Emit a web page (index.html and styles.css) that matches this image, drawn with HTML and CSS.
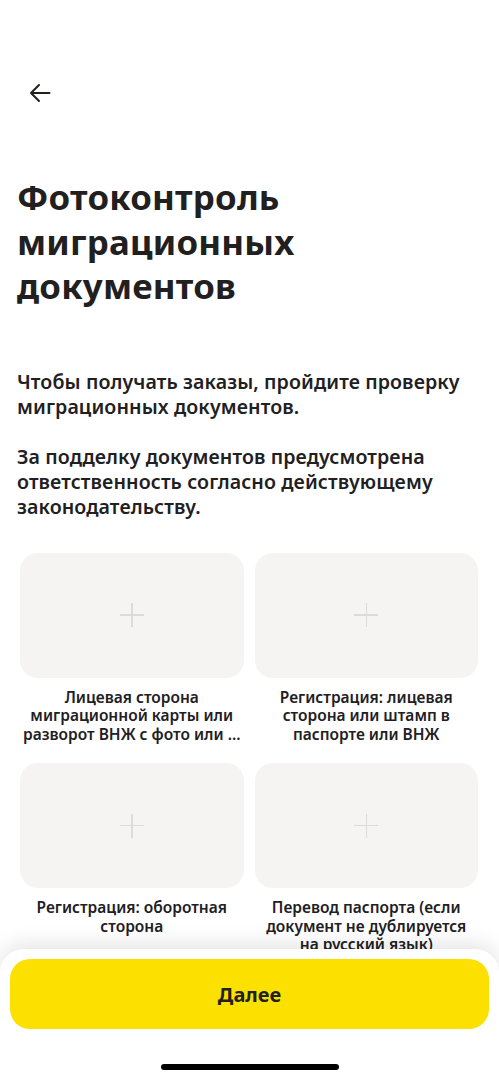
FILE: index.html
```html
<!DOCTYPE html>
<html lang="ru">
<head>
<meta charset="utf-8">
<title>Фотоконтроль миграционных документов</title>
<link rel="stylesheet" href="styles.css">
</head>
<body>
<div class="page">
  <header class="header">
    <svg class="back" width="22" height="22" viewBox="0 0 22 22" fill="none">
      <path d="M20.5 11H2M10 3L2 11L10 19" stroke="#21201f" stroke-width="2" stroke-linecap="round" stroke-linejoin="round"/>
    </svg>
  </header>

  <h1 class="title">Фотоконтроль миграционных документов</h1>

  <p class="text">Чтобы получать заказы, пройдите проверку миграционных документов.</p>
  <p class="text">За подделку документов предусмотрена ответственность согласно действующему законодательству.</p>

  <div class="grid">
    <div class="item">
      <div class="card"><span class="plus"></span></div>
      <div class="caption">Лицевая сторона<br>миграционной карты или<br>разворот ВНЖ с фото или ...</div>
    </div>
    <div class="item">
      <div class="card"><span class="plus"></span></div>
      <div class="caption">Регистрация: лицевая<br>сторона или штамп в<br>паспорте или ВНЖ</div>
    </div>
    <div class="item">
      <div class="card"><span class="plus"></span></div>
      <div class="caption">Регистрация: оборотная<br>сторона</div>
    </div>
    <div class="item">
      <div class="card"><span class="plus"></span></div>
      <div class="caption">Перевод паспорта (если<br>документ не дублируется<br>на русский язык)</div>
    </div>
  </div>
</div>

<div class="footer">
  <button class="next">Далее</button>
  <div class="home"></div>
</div>
</body>
</html>
```

FILE: styles.css
```css
* {
  box-sizing: border-box;
}

html, body {
  margin: 0;
  padding: 0;
  background: #ffffff;
}

body {
  font-family: "Noto Sans", "Open Sans", sans-serif;
  color: #21201f;
  width: 499px;
  height: 1080px;
  overflow: hidden;
}

.page {
  padding: 0 17px;
}

.header {
  padding: 82px 0 0 12px;
  height: 104px;
}

.back {
  display: block;
}

.title {
  margin: 71px 0 0;
  font-size: 34.8px;
  line-height: 44.5px;
  font-weight: 700;
  letter-spacing: 0.2px;
  width: 320px;
}

.text {
  margin: 0;
  font-size: 19.6px;
  line-height: 25px;
  font-weight: 600;
  letter-spacing: 0.1px;
}

.text + .text {
  margin-top: 25px;
}

.title + .text {
  margin-top: 60px;
}

.grid {
  display: grid;
  grid-template-columns: minmax(0, 1fr) minmax(0, 1fr);
  column-gap: 11px;
  row-gap: 20px;
  margin: 34px 4px 0 3px;
}

.item {
  display: flex;
  flex-direction: column;
  align-items: stretch;
  min-width: 0;
}

.card {
  height: 125px;
  border-radius: 18px;
  background: #f5f4f2;
  display: flex;
  align-items: center;
  justify-content: center;
}

.plus {
  position: relative;
  width: 24px;
  height: 24px;
}

.plus::before,
.plus::after {
  content: "";
  position: absolute;
  background: #dddbd7;
}

.plus::before {
  left: 0;
  right: 0;
  top: 11.25px;
  height: 1.5px;
}

.plus::after {
  top: 0;
  bottom: 0;
  left: 11.25px;
  width: 1.5px;
}

.caption {
  margin-top: 10px;
  text-align: center;
  font-size: 15.5px;
  line-height: 18.5px;
  font-weight: 600;
  letter-spacing: 0;
  white-space: nowrap;
}

.footer {
  position: fixed;
  left: 0;
  right: 0;
  bottom: 0;
  height: 131px;
  background: #ffffff;
  border-radius: 24px 24px 0 0;
  box-shadow: 0 -6px 20px rgba(0, 0, 0, 0.1);
  padding: 10px 10px 0;
  display: flex;
  flex-direction: column;
  align-items: center;
}

.next {
  width: 100%;
  height: 70px;
  border: none;
  border-radius: 20px;
  background: #fce000;
  color: #21201f;
  font-family: "Noto Sans", "Open Sans", sans-serif;
  font-size: 20px;
  font-weight: 700;
  letter-spacing: 0;
  padding: 0;
}

.home {
  margin-top: 35px;
  width: 178px;
  height: 6px;
  border-radius: 3px;
  background: #000000;
}
```
